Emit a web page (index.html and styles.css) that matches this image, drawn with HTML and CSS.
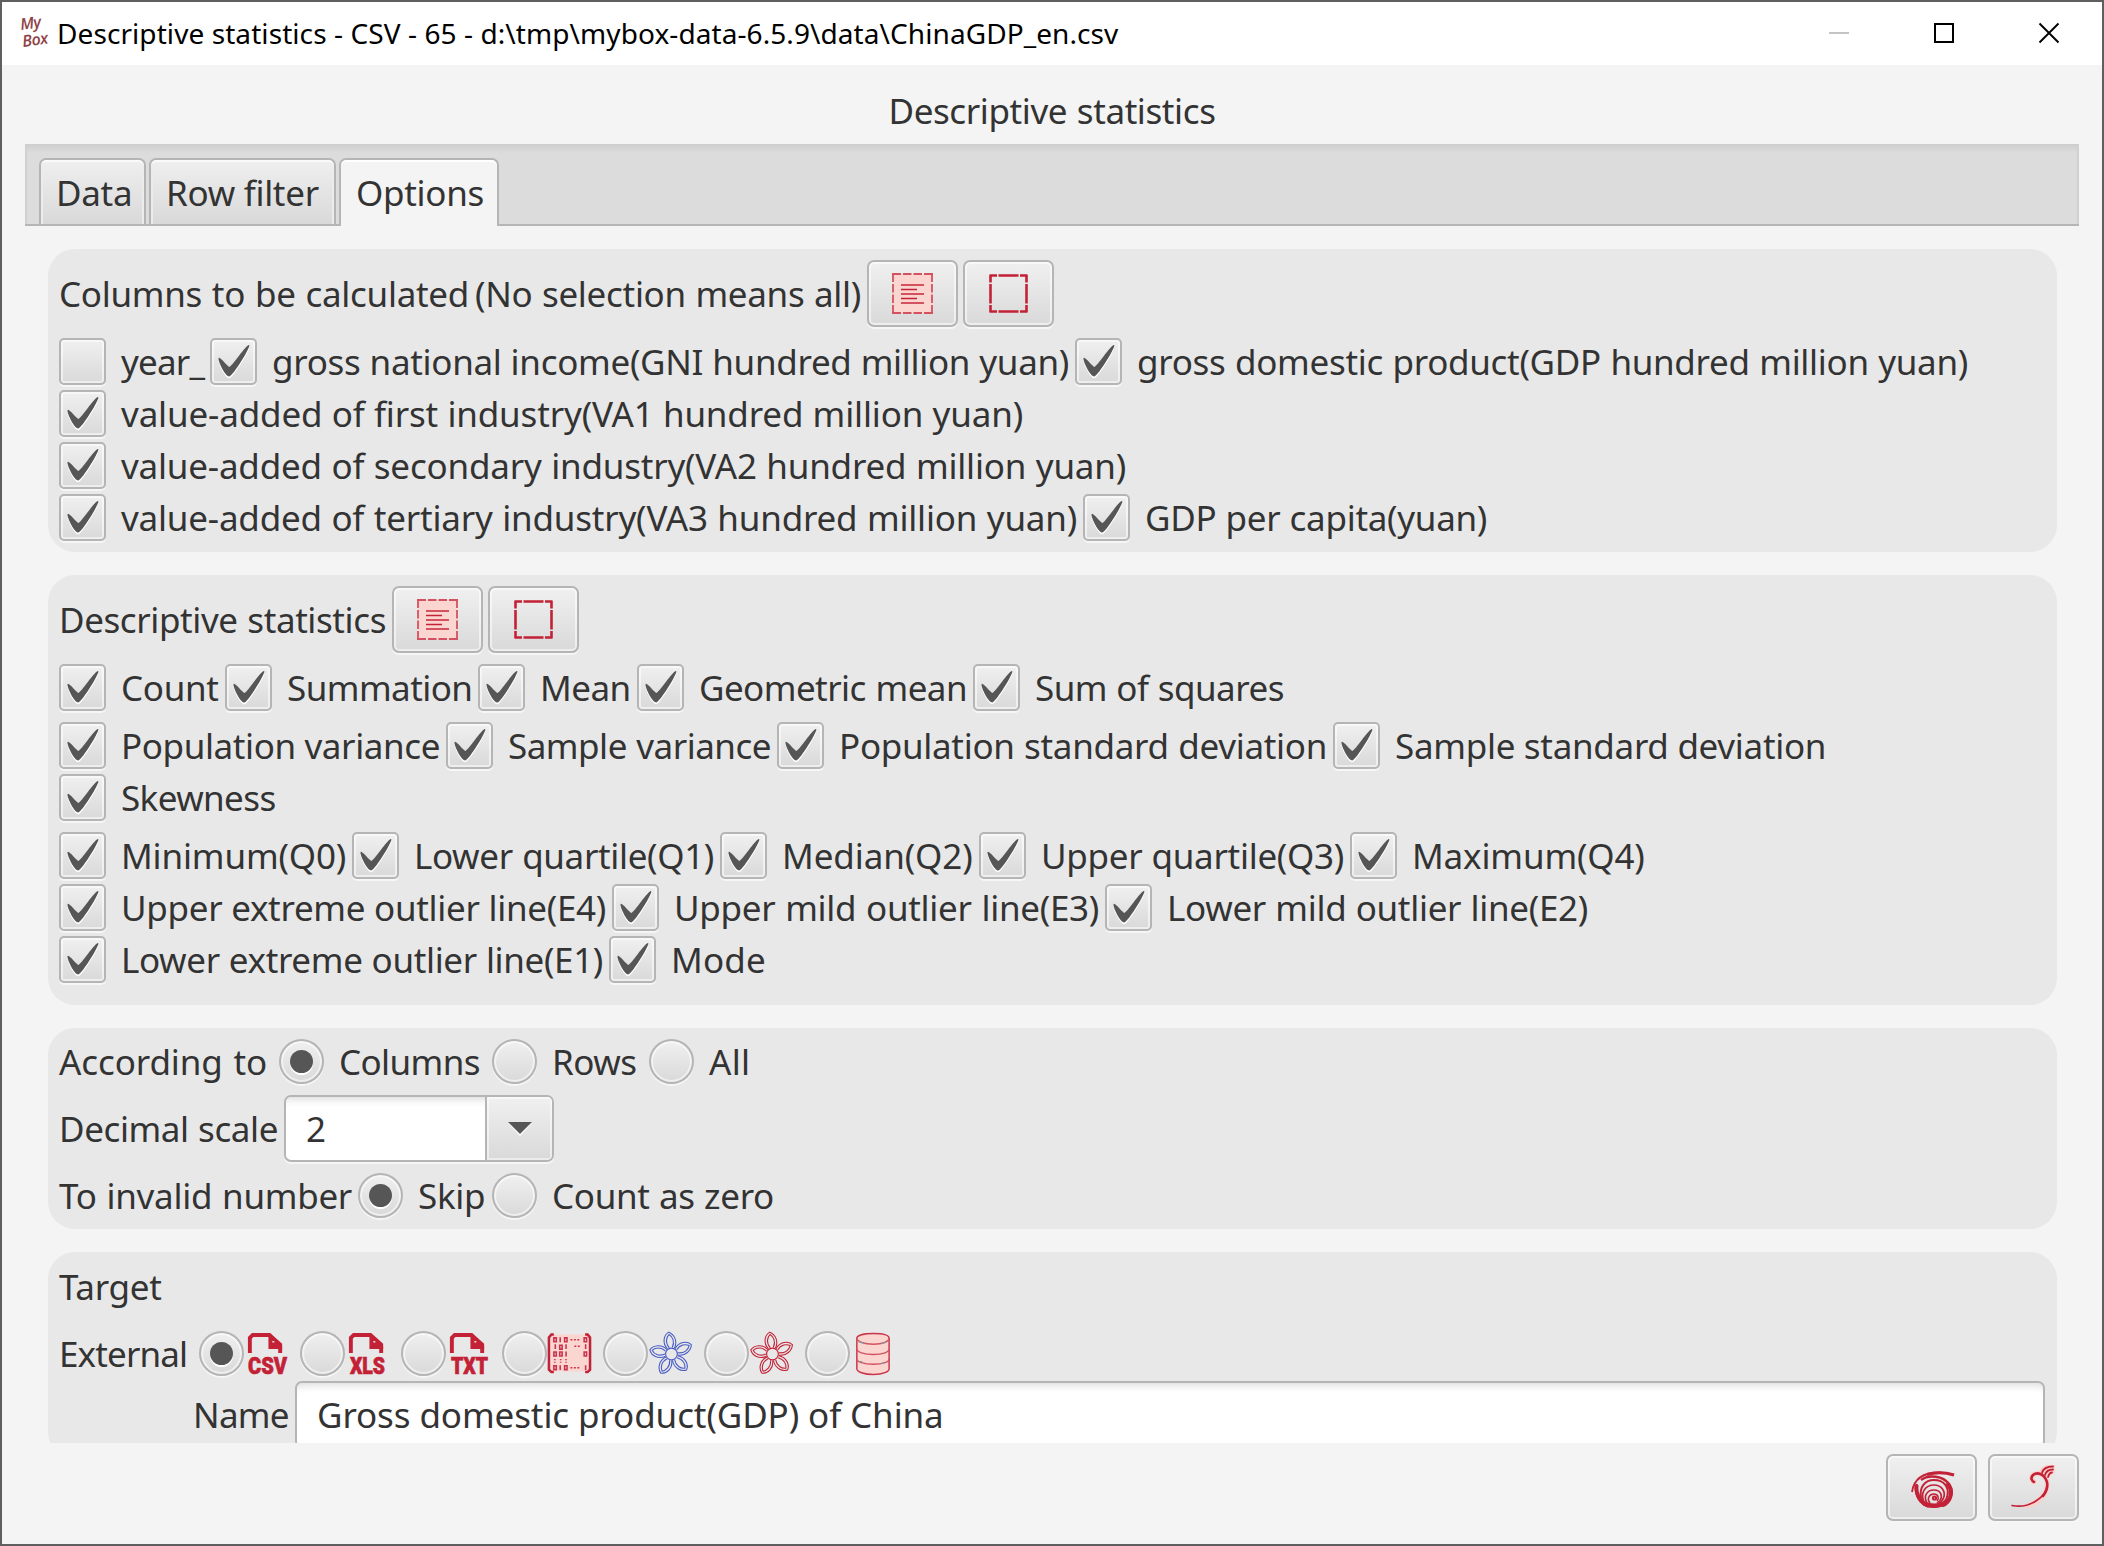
FILE: index.html
```html
<!DOCTYPE html>
<html lang="en">
<head>
<meta charset="utf-8">
<title>Descriptive statistics</title>
<link rel="stylesheet" href="styles.css">
</head>
<body>
<svg class="defs" aria-hidden="true">
  <symbol id="check" viewBox="0 0 47 47">
    <path fill="#fff" transform="translate(9.2 10.6) scale(1.88 1.84)" d="M-0.25,6.083c0.843-0.758,4.583,4.833,5.75,4.833S14.5-1.5,15.917-0.917c1.292,0.532-8.75,17.083-10.5,17.083C3,16.167-1.094,6.842-0.25,6.083z"/>
    <path fill="#565656" transform="translate(9.2 8.8) scale(1.88 1.84)" d="M-0.25,6.083c0.843-0.758,4.583,4.833,5.75,4.833S14.5-1.5,15.917-0.917c1.292,0.532-8.75,17.083-10.5,17.083C3,16.167-1.094,6.842-0.25,6.083z"/>
  </symbol>
  <symbol id="select-all" viewBox="0 0 42 42">
    <rect x="1" y="1" width="39" height="39" fill="#fbd5d0"/>
    <g fill="none" stroke="#d4525f" stroke-width="1.800">
      <path d="M0 1H9M11 1H19.500M21.500 1H30M32 1H41M0 40H9M11 40H19.500M21.500 40H30M32 40H41M1 1V9M1 11V19.500M1 21.500V30M1 32V40M40 1V9M40 11V19.500M40 21.500V30M40 32V40"/>
      <path d="M9 12H32M9 21H32M9 30H32" stroke-width="2.200"/>
    </g>
    <path d="M9 16.500H25M9 25.500H25" stroke="#c32136" stroke-width="1.400"/>
  </symbol>
  <symbol id="select-none" viewBox="0 0 42 42">
    <path d="M1.500 2.500H9M10.500 2.500H30.500M32 2.500H39.500M1.500 38.500H9M10.500 38.500H30.500M32 38.500H39.500M2.500 2V9.500M2.500 11V30.500M2.500 32V39M38.500 2V9.500M38.500 11V30.500M38.500 32V39" fill="none" stroke="#c32136" stroke-width="2.600"/>
  </symbol>
  <symbol id="file" viewBox="0 0 45 45">
    <path d="M6 22V6.500L9 3.500H26L37 13.500V22" fill="none" stroke="#c32136" stroke-width="4"/>
    <path d="M25 2L39 15V18H25Z" fill="#c32136"/>
    <path d="M29 10.500h2" stroke="#e8e8e8" stroke-width="1.500"/>
  </symbol>
  <symbol id="flower" viewBox="0 0 45 45">
    <g fill="none" stroke="currentColor" stroke-width="1.100">
      <circle cx="24" cy="23" r="6"/>
      <g id="petal" transform="rotate(-6 24 23)">
        <path d="M20.500 17.500C15.500 11 18 3 23.500 .5C29 3 32 11 27.500 17.500"/>
        <path d="M22.500 16.500C18.500 11 20.500 5.500 23.500 3C27 5.500 29 11 25.500 16.500"/>
      </g>
      <use href="#petal" transform="rotate(72 24 23)"/>
      <use href="#petal" transform="rotate(144 24 23)"/>
      <use href="#petal" transform="rotate(216 24 23)"/>
      <use href="#petal" transform="rotate(288 24 23)"/>
    </g>
  </symbol>
</svg>
<div class="window">
  <header class="titlebar">
    <svg class="logo" viewBox="0 0 32 34"><text x="2" y="14" transform="rotate(-8 2 14)">My</text><text x="4" y="31" transform="rotate(-8 4 31)">Box</text></svg>
    <span class="caption">Descriptive statistics - CSV - 65 - d:\tmp\mybox-data-6.5.9\data\ChinaGDP_en.csv</span>
    <div class="controls">
      <svg viewBox="0 0 24 24"><path d="M2 12H22" stroke="#c4c4c4" stroke-width="2"/></svg>
      <svg viewBox="0 0 24 24"><rect x="3" y="3" width="18" height="18" fill="none" stroke="#000" stroke-width="2"/></svg>
      <svg viewBox="0 0 24 24"><path d="M2.500 2.500L21.500 21.500M21.500 2.500L2.500 21.500" stroke="#000" stroke-width="1.900"/></svg>
    </div>
  </header>
  <h1><span class="t statistics">Descriptive statistics</span></h1>
  <nav class="tabs">
    <div class="tab data">Data</div><div class="tab filter">Row filter</div><div class="tab options active">Options</div>
  </nav>
  <main class="scroll">
    <section class="panel">
      <div class="row head"><span class="t columns-title">Columns to be calculated</span><span class="t columns-hint">(No selection means all)</span>
        <button class="btn"><svg><use href="#select-all"/></svg></button><button class="btn"><svg><use href="#select-none"/></svg></button></div>
      <div class="group">
        <div class="row"><label><i class="box"></i><span class="t year">year_</span></label><label><i class="box"><svg><use href="#check"/></svg></i><span class="t gni">gross national income(GNI hundred million yuan)</span></label><label><i class="box"><svg><use href="#check"/></svg></i><span class="t gdp">gross domestic product(GDP hundred million yuan)</span></label></div>
        <div class="row"><label><i class="box"><svg><use href="#check"/></svg></i><span class="t va1">value-added of first industry(VA1 hundred million yuan)</span></label></div>
        <div class="row"><label><i class="box"><svg><use href="#check"/></svg></i><span class="t va2">value-added of secondary industry(VA2 hundred million yuan)</span></label></div>
        <div class="row"><label><i class="box"><svg><use href="#check"/></svg></i><span class="t va3">value-added of tertiary industry(VA3 hundred million yuan)</span></label><label><i class="box"><svg><use href="#check"/></svg></i><span class="t capita">GDP per capita(yuan)</span></label></div>
      </div>
    </section>
    <section class="panel statistics-panel">
      <div class="row head"><span class="t statistics">Descriptive statistics</span>
        <button class="btn"><svg><use href="#select-all"/></svg></button><button class="btn"><svg><use href="#select-none"/></svg></button></div>
      <div class="group">
        <div class="row"><label><i class="box"><svg><use href="#check"/></svg></i><span class="t count">Count</span></label><label><i class="box"><svg><use href="#check"/></svg></i><span class="t sum">Summation</span></label><label><i class="box"><svg><use href="#check"/></svg></i><span class="t mean">Mean</span></label><label><i class="box"><svg><use href="#check"/></svg></i><span class="t geomean">Geometric mean</span></label><label><i class="box"><svg><use href="#check"/></svg></i><span class="t squares">Sum of squares</span></label></div>
      </div>
      <div class="group">
        <div class="row"><label><i class="box"><svg><use href="#check"/></svg></i><span class="t pvar">Population variance</span></label><label><i class="box"><svg><use href="#check"/></svg></i><span class="t svar">Sample variance</span></label><label><i class="box"><svg><use href="#check"/></svg></i><span class="t psd">Population standard deviation</span></label><label><i class="box"><svg><use href="#check"/></svg></i><span class="t ssd">Sample standard deviation</span></label></div>
        <div class="row"><label><i class="box"><svg><use href="#check"/></svg></i><span class="t skew">Skewness</span></label></div>
      </div>
      <div class="group">
        <div class="row"><label><i class="box"><svg><use href="#check"/></svg></i><span class="t q0">Minimum(Q0)</span></label><label><i class="box"><svg><use href="#check"/></svg></i><span class="t q1">Lower quartile(Q1)</span></label><label><i class="box"><svg><use href="#check"/></svg></i><span class="t q2">Median(Q2)</span></label><label><i class="box"><svg><use href="#check"/></svg></i><span class="t q3">Upper quartile(Q3)</span></label><label><i class="box"><svg><use href="#check"/></svg></i><span class="t q4">Maximum(Q4)</span></label></div>
        <div class="row"><label><i class="box"><svg><use href="#check"/></svg></i><span class="t e4">Upper extreme outlier line(E4)</span></label><label><i class="box"><svg><use href="#check"/></svg></i><span class="t e3">Upper mild outlier line(E3)</span></label><label><i class="box"><svg><use href="#check"/></svg></i><span class="t e2">Lower mild outlier line(E2)</span></label></div>
        <div class="row"><label><i class="box"><svg><use href="#check"/></svg></i><span class="t e1">Lower extreme outlier line(E1)</span></label><label><i class="box"><svg><use href="#check"/></svg></i><span class="t mode">Mode</span></label></div>
      </div>
    </section>
    <section class="panel">
      <div class="row radios spaced"><span class="t according">According to</span><label><i class="radio on"></i><span class="t by-columns">Columns</span></label><label><i class="radio"></i><span class="t by-rows">Rows</span></label><label><i class="radio"></i><span class="t by-all">All</span></label></div>
      <div class="row head"><span class="t scale">Decimal scale</span><div class="combo"><span class="value">2</span><span class="arrow"><svg viewBox="0 0 24 16"><path d="M0 2H24L12 15Z" fill="#fff"/><path d="M0 1H24L12 13Z" fill="#565656"/></svg></span></div></div>
      <div class="row radios"><span class="t invalid">To invalid number</span><label><i class="radio on"></i><span class="t skip">Skip</span></label><label><i class="radio"></i><span class="t zero">Count as zero</span></label></div>
    </section>
    <section class="panel target-panel">
      <div class="row target"><span class="t">Target</span></div>
      <div class="row radios spaced formats"><span class="t external">External</span>
        <label><i class="radio on"></i><svg class="fmt"><use href="#file"/><text x="4" y="43" textLength="39" lengthAdjust="spacingAndGlyphs">CSV</text></svg></label>
        <label><i class="radio"></i><svg class="fmt"><use href="#file"/><text x="5" y="43" textLength="35" lengthAdjust="spacingAndGlyphs">XLS</text></svg></label>
        <label><i class="radio"></i><svg class="fmt"><use href="#file"/><text x="5" y="43" textLength="37" lengthAdjust="spacingAndGlyphs">TXT</text></svg></label>
        <label><i class="radio"></i><svg class="fmt" viewBox="0 0 45 45">
          <rect x="4" y="3" width="38" height="38" fill="#fbd5d0"/>
          <path d="M7 3H4.500L2 6V39L4.500 41.500H7M39 3h2.500L44 6V39L41.500 41.500H39" fill="none" stroke="#c32136" stroke-width="2.600"/>
          <g fill="none" stroke="#c9344a" stroke-width="1.600">
            <path d="M7 6.500h2.500v4H7zM18 6.500h2.500v4H18zM38 6.500h2.500v4H38zM13 14h2.500v4H13zM7 21h2.500v4H7zM13 21h2.500v4H13zM38 21h2.500v4H38zM7 35h2.500v4H7zM18 35h2.500v4H18z"/>
            <path d="M13.500 6v5M8.500 13v5M19.500 13v5M39.500 13v5M19.500 20.500v5M13.500 34.500v5M39.500 34.500v5"/>
            <path d="M24 8.500h9M28 15h6M24 37h9" stroke-dasharray="2 1.500"/>
            <path d="M8 28v4M14 28v4M19.500 28v4" stroke-dasharray="1.500 1.500"/>
          </g></svg></label>
        <label><i class="radio"></i><svg class="fmt blue"><use href="#flower"/></svg></label>
        <label><i class="radio"></i><svg class="fmt red"><use href="#flower"/></svg></label>
        <label><i class="radio"></i><svg class="fmt" viewBox="0 0 45 45">
          <path d="M7 7C7 4 14 2 24 2S40 4 40 7V38C40 41 34 44 24 44S7 41 7 38Z" fill="#fbd5d0" stroke="#c9344a" stroke-width="1.500"/>
          <path d="M7 7C7 10 14 13 24 13S40 10 40 7M7 18C7 21 14 23.500 24 23.500S40 21 40 18M7 28C7 31 14 33.500 24 33.500S40 31 40 28" fill="none" stroke="#d4525f" stroke-width="1.500"/>
          <path d="M9 10.500l6 2M32 12.500l5-1.500M10 30.500l3 1M31 33l4-1" stroke="#7d9aa5" stroke-width="1.200"/></svg></label>
      </div>
      <div class="row name-row"><span class="t name">Name</span><div class="input">Gross domestic product(GDP) of China</div></div>
    </section>
  </main>
  <footer class="actions">
    <button class="btn"><svg viewBox="0 0 46 46" class="act">
      <g fill="none" stroke="#c32136">
        <path d="M3 27C5 13 16 7.500 30 7.500C36 7.500 41 8.500 45 10" stroke-width="1.800"/>
        <path d="M18 9.500C28 6.500 37 7.500 45 10" stroke-width="3"/>
        <path d="M12 15C20 9 34 11 40 19C46 28 41 40 27 41.500H22C10 40 5 28 8 19" stroke-width="2.600"/>
        <path d="M38 18C45 26 42 37 33 40.500M7.500 20C6.500 30 12 38.500 20 41" stroke-width="4"/>
        <path d="M12 33C10 22 16 15 25 15C35 15 40 22 38.500 30C38 34 35 38 32 39" stroke-width="2"/>
        <path d="M15 37C11 28 16 20 25 20C33 20 37 27 34.500 33C33.500 36 31 38 29 39" stroke-width="1.700"/>
        <path d="M18 38C14 31 18 25 25 25C32 25 34 31 31 35.500L28 38" stroke-width="1.600"/>
        <path d="M21 38C17.500 34 20 29 25 29C29 29 30.500 33 28 36" stroke-width="1.500"/>
        <circle cx="25.500" cy="33" r="1.600" stroke-width="2"/>
        <path d="M15 38.500Q25 43 36 38.500" stroke-width="4.500"/>
      </g></svg></button>
    <button class="btn"><svg viewBox="0 0 46 46" class="act">
      <g fill="none" stroke-linecap="round" stroke-linejoin="round">
        <path d="M16 41C30 37 37 27 36 17C34 8 26 7 22 10C19 13 21 16 23 17" stroke="#fbd0cb" stroke-width="5"/>
        <path d="M30 7C32 3 36 1 42 1M33 9C35 5 38 4 42 4M37 11C38 8 40 7 42 7" stroke="#fbd0cb" stroke-width="4"/>
        <path d="M1 40.500C18 44 37 32 36 18" stroke="#c32136" stroke-width="1.700"/>
        <path d="M32 31C36 26 37 22 36 17C33 8 26 7 22 10C19 13 21 16 23 17" stroke="#c32136" stroke-width="2.600"/>
        <path d="M31 8C32 4 36 1.500 42 1.500M34 10C35 6 38 4.500 42 4.500M37 12C38 9 40 7.500 41 7.500" stroke="#c32136" stroke-width="1.800"/>
      </g></svg></button>
  </footer>
</div>
</body>
</html>
```
FILE: styles.css
```css
* { box-sizing: border-box; }
body { margin: 0; font: 35px/47px "Noto Sans", "Open Sans", sans-serif; color: #333; background: #5f5f5f; letter-spacing: -0.3px; }
.defs { position: absolute; width: 0; height: 0; }
.window { width: 2104px; height: 1546px; border: 2px solid #5f5f5f; background: #f4f4f4; display: flex; flex-direction: column; overflow: hidden; }

.titlebar { height: 63px; flex: none; background: #fff; display: flex; align-items: center; padding: 0 0 2px 17px; color: #000; }
.logo { width: 32px; height: 34px; overflow: visible; font: italic 600 16px "Open Sans", sans-serif; letter-spacing: -.5px; fill: #8e4346; }
.caption { flex: 1; font-size: 28px; line-height: 40px; margin-left: 6px; white-space: nowrap; letter-spacing: 0.08px; }
.controls { display: flex; gap: 81px; margin-right: 41px; }
.controls svg { width: 24px; height: 24px; }

h1 { margin: 0; height: 79px; flex: none; font-size: inherit; font-weight: 400; display: flex; justify-content: center; padding-top: 22px; }

.tabs { height: 82px; flex: none; margin: 0 23px; background: linear-gradient(#cdcdcd, #dcdcdc 9px, #dcdcdc); border-bottom: 2px solid #b5b5b5; box-shadow: inset 2px 0 #d0d0d0, inset -2px 0 #d0d0d0; display: flex; align-items: flex-start; gap: 3px; padding: 14px 0 0 14px; }
.tab { height: 66px; border: 2px solid #b5b5b5; border-bottom: 0; border-radius: 7px 7px 0 0; background: linear-gradient(#efefef, #d9d9d9); box-shadow: inset 0 2px #fafafa, inset 2px 0 #ececec, inset -2px 0 #ececec; line-height: 65px; padding-left: 15px; white-space: nowrap; }
.tab.active { height: 68px; background: #f4f4f4; box-shadow: inset 0 2px #fff; }
.data { width: 107px; }
.filter { width: 187px; }
.options { width: 160px; }

.scroll { height: 1217px; flex: none; padding: 23px 45px 0 46px; display: flex; flex-direction: column; gap: 23px; overflow: hidden; }
.panel { flex: none; background: #e8e8e8; border-radius: 27px; padding: 11px; display: flex; flex-direction: column; gap: 11px; }
.statistics-panel { padding-bottom: 22px; }
.group { display: flex; flex-direction: column; gap: 5px; }
.row { display: flex; align-items: center; gap: 6px; height: 47px; }
.row.head { height: 67px; }
.row.radios { height: 45px; }
.row.spaced { gap: 12px; }
.row label { display: flex; align-items: center; gap: 15px; }
.t { white-space: nowrap; display: block; text-align-last: justify; flex: none; height: 47px; }

.box, .btn, .radio { border: 2px solid #b5b5b5; background: linear-gradient(#f0f0f0, #d9d9d9); box-shadow: inset 0 0 0 2px rgba(255, 255, 255, .55), 0 2px #f6f6f6; }
.box { width: 47px; height: 47px; border-radius: 5px; flex: none; display: block; }
.box svg { display: block; width: 47px; height: 47px; margin: -2px; }
.radio { width: 45px; height: 45px; border-radius: 50%; flex: none; display: grid; place-items: center; }
.radio.on::after { content: ""; width: 23px; height: 23px; border-radius: 50%; background: #565656; box-shadow: 0 2px #fff; }
.btn { width: 91px; height: 67px; border-radius: 7px; padding: 0; display: grid; place-items: center; flex: none; margin-right: -1px; }
.btn svg { width: 42px; height: 42px; }
.btn svg.act { width: 46px; height: 46px; }

.combo { width: 270px; height: 67px; border: 2px solid #b5b5b5; border-radius: 7px; background: #fff; box-shadow: 0 2px #f6f6f6; display: flex; overflow: hidden; }
.value { flex: 1; padding-left: 20px; line-height: 63px; box-shadow: inset 0 10px 8px -8px #d8d8d8; }
.arrow { width: 67px; border-left: 2px solid #b5b5b5; background: linear-gradient(#f0f0f0, #d9d9d9); box-shadow: inset 0 0 0 2px rgba(255, 255, 255, .5); display: grid; place-items: center; }
.arrow svg { width: 24px; height: 16px; }

.target { height: 57px; align-items: flex-start; }
.row.formats label { gap: 0; }
.fmt { width: 44px; height: 45px; display: block; overflow: visible; }
.fmt text { font: 900 24px Roboto, sans-serif; fill: #c32136; stroke: #c32136; stroke-width: .7px; letter-spacing: 0; }
.blue { color: #4a5cc4; }
.red { color: #c32136; }
.name-row { height: 67px; margin-top: -6px; padding-left: 134px; }
.input { flex: 1; height: 67px; border: 2px solid #b5b5b5; border-radius: 7px; background: #fff; box-shadow: inset 0 10px 8px -8px #d8d8d8; padding-left: 20px; line-height: 63px; margin-right: 1px; letter-spacing: -0.1px; }

.actions { display: flex; gap: 12px; justify-content: flex-end; padding: 11px 24px 0 0; }

/* label widths */
.columns-title { width: 410px; }
.columns-hint { width: 386px; }
.year { width: 83px; letter-spacing: -0.8px; }
.gni { width: 797px; }
.gdp { width: 831px; }
.va1 { width: 902px; letter-spacing: -0.15px; }
.va2 { width: 1005px; letter-spacing: -0.2px; }
.va3 { width: 956px; letter-spacing: -0.2px; }
.capita { width: 342px; }
.statistics { width: 327px; letter-spacing: -0.4px; }
.count { width: 98px; }
.sum { width: 185px; letter-spacing: -0.55px; }
.mean { width: 91px; letter-spacing: -0.5px; }
.geomean { width: 268px; letter-spacing: -0.55px; }
.squares { width: 249px; letter-spacing: -0.5px; }
.pvar { width: 319px; letter-spacing: -0.4px; }
.svar { width: 263px; letter-spacing: -0.5px; }
.psd { width: 488px; }
.ssd { width: 431px; }
.skew { width: 154px; letter-spacing: -0.6px; }
.q0 { width: 225px; letter-spacing: -0.15px; }
.q1 { width: 300px; letter-spacing: -0.35px; }
.q2 { width: 191px; letter-spacing: -0.1px; }
.q3 { width: 303px; }
.q4 { width: 232px; letter-spacing: -0.15px; }
.e4 { width: 485px; }
.e3 { width: 425px; }
.e2 { width: 421px; }
.e1 { width: 482px; letter-spacing: -0.35px; }
.mode { width: 95px; letter-spacing: 0.2px; }
.according { width: 208px; letter-spacing: -0.1px; }
.by-columns { width: 141px; letter-spacing: -0.6px; }
.by-rows { width: 85px; letter-spacing: -0.5px; }
.by-all { width: 42px; letter-spacing: 0.3px; }
.scale { width: 219px; letter-spacing: -0.4px; }
.invalid { width: 293px; }
.skip { width: 68px; }
.zero { width: 222px; }
.external { width: 128px; letter-spacing: -0.85px; }
.name { width: 96px; letter-spacing: -0.7px; }
```
